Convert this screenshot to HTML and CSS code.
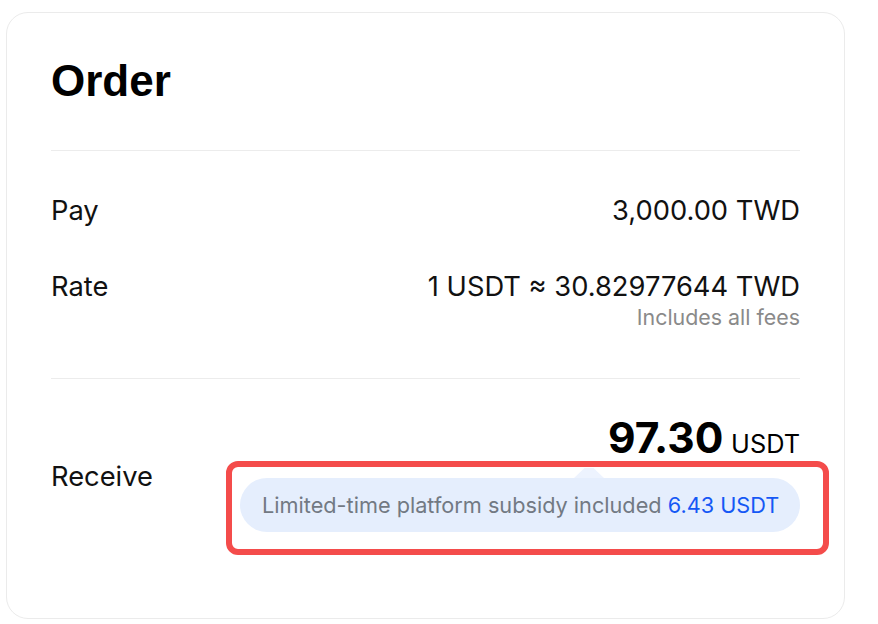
FILE: index.html
```html
<!DOCTYPE html>
<html lang="en">
<head>
<meta charset="utf-8">
<title>Order</title>
<link rel="stylesheet" href="styles.css">
</head>
<body>
<div class="card">
  <h1 class="title">Order</h1>
  <div class="divider"></div>
  <div class="row row-pay">
    <div class="label">Pay</div>
    <div class="value">3,000.00 TWD</div>
  </div>
  <div class="row row-rate">
    <div class="label">Rate</div>
    <div class="value-col">
      <div class="value">1 USDT ≈ 30.82977644 TWD</div>
      <div class="note">Includes all fees</div>
    </div>
  </div>
  <div class="divider divider-2"></div>
  <div class="row row-receive">
    <div class="label label-receive">Receive</div>
    <div class="receive-col">
      <div class="amount"><span class="amount-num">97.30</span> <span class="amount-unit">USDT</span></div>
      <div class="pill-wrap">
        <div class="pill-arrow"></div>
        <div class="pill">Limited-time platform subsidy included&nbsp;<span class="pill-hl">6.43 USDT</span></div>
        <div class="highlight-box"></div>
      </div>
    </div>
  </div>
</div>
</body>
</html>
```
FILE: styles.css
```css
html, body {
  margin: 0;
  padding: 0;
  background: #ffffff;
}
body {
  padding: 12px 33px 0 6px;
  font-family: Inter, "Noto Sans", sans-serif;
  color: #111111;
}
.card {
  box-sizing: border-box;
  width: 839px;
  height: 607px;
  border: 1px solid #ebebeb;
  border-radius: 22px;
  padding: 0 44px;
  background: #ffffff;
}
.title {
  margin: 0;
  padding-top: 43px;
  height: 94px;
  box-sizing: border-box;
  font-family: "Liberation Sans", Arial, sans-serif;
  font-weight: 700;
  font-size: 44px;
  line-height: 50px;
  color: #000000;
}
.divider {
  height: 1px;
  background: #ececec;
  margin-top: 43px;
}
.row {
  display: flex;
  justify-content: space-between;
  align-items: flex-start;
  font-size: 27.3px;
  line-height: 32px;
  color: #111111;
}
.row-pay {
  margin-top: 44px;
}
.row-rate {
  margin-top: 44px;
}
.value-col {
  display: flex;
  flex-direction: column;
  align-items: flex-end;
}
.note {
  font-size: 21.4px;
  line-height: 26px;
  color: #8a8a8a;
  margin-top: 1px;
}
.divider-2 {
  margin-top: 48px;
}
.row-receive {
  margin-top: 33px;
  align-items: center;
}
.label-receive {
  padding-top: 10px;
}
.receive-col {
  display: flex;
  flex-direction: column;
  align-items: flex-end;
}
.amount {
  line-height: 52px;
  color: #000000;
}
.amount-num {
  font-size: 42.5px;
  font-weight: 700;
}
.amount-unit {
  font-size: 25.3px;
}
.pill-wrap {
  position: relative;
  margin-top: 8px;
}
.pill-arrow {
  position: absolute;
  top: -10px;
  left: 334px;
  width: 30px;
  height: 10px;
  background: #edf3fe;
  clip-path: polygon(35% 0, 65% 0, 100% 100%, 0 100%);
}
.pill {
  box-sizing: border-box;
  width: 560px;
  background: #e5eefd;
  border-radius: 28px;
  height: 54px;
  padding: 0 22px;
  display: flex;
  align-items: center;
  font-size: 21.7px;
  color: #727983;
  white-space: nowrap;
}
.pill-hl {
  color: #1558f5;
}
.highlight-box {
  position: absolute;
  left: -14px;
  top: -17px;
  right: -29px;
  bottom: -23px;
  border: 6px solid #f44c4b;
  border-radius: 12px;
  box-sizing: border-box;
  pointer-events: none;
}
```
